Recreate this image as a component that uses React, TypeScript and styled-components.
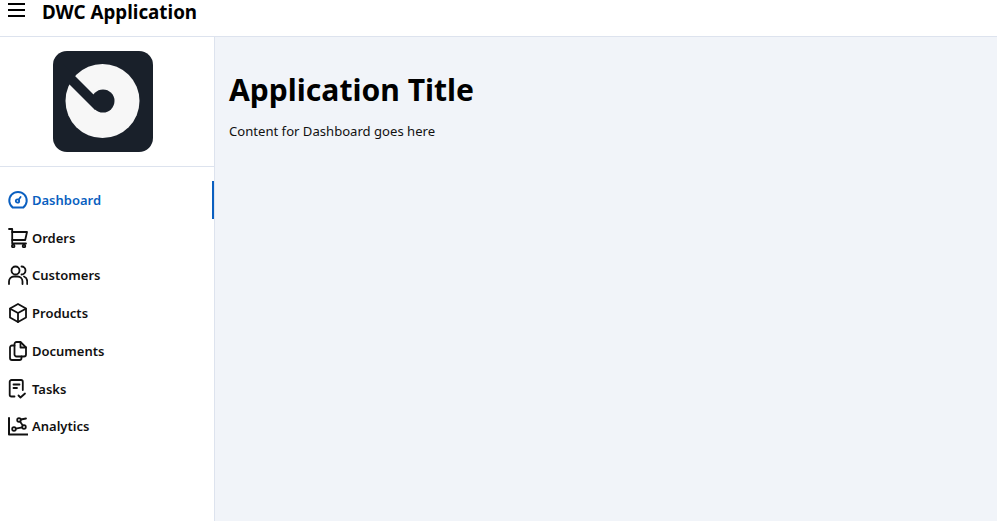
import React from "react";
import styled, { createGlobalStyle } from "styled-components";

const GlobalStyle = createGlobalStyle`
  html, body {
    margin: 0;
    padding: 0;
    height: 100%;
    overflow: hidden;
    background: #fff;
    font-family: "Noto Sans", "Open Sans", sans-serif;
  }
`;

const Page = styled.div`
  display: flex;
  flex-direction: column;
  height: 100vh;
`;

const Toolbar = styled.header`
  display: flex;
  align-items: center;
  gap: 16px;
  padding: 0 0 12px 8px;
  box-sizing: border-box;
  border-bottom: 1px solid #dde3ee;
  flex: 0 0 37px;
`;

const MenuButton = styled.div`
  display: flex;
  width: 18px;
  height: 18px;
  color: #000;
`;

const AppName = styled.div`
  font-size: 18.8px;
  font-weight: 700;
  color: #000;
  line-height: 22px;
`;

const Body = styled.div`
  display: flex;
  flex: 1;
  min-height: 0;
`;

const Sidebar = styled.aside`
  width: 215px;
  flex: 0 0 215px;
  box-sizing: border-box;
  border-right: 1px solid #dde3ee;
  background: #fff;
`;

const LogoArea = styled.div`
  display: flex;
  justify-content: center;
  padding: 14px 8px 14px 0;
  border-bottom: 1px solid #dde3ee;
`;

const Nav = styled.nav`
  display: flex;
  flex-direction: column;
  padding-top: 14px;
`;

const NavItem = styled.div<{ $active?: boolean }>`
  display: flex;
  align-items: center;
  gap: 4px;
  height: 37.75px;
  padding-left: 8px;
  box-sizing: border-box;
  font-size: 13px;
  font-weight: 600;
  color: ${(p) => (p.$active ? "#0a5fc0" : "#111")};
  border-right: 2px solid ${(p) => (p.$active ? "#0a5fc0" : "transparent")};
`;

const NavIcon = styled.svg`
  width: 20px;
  height: 20px;
  flex: 0 0 20px;
  fill: none;
  stroke: currentColor;
  stroke-width: 1.8;
  stroke-linecap: round;
  stroke-linejoin: round;
`;

const Main = styled.main`
  flex: 1;
  background: #f1f4f9;
  padding: 31px 14px;
`;

const Title = styled.h1`
  margin: 0;
  font-size: 30.1px;
  line-height: 44px;
  font-weight: 700;
  color: #000;
`;

const Text = styled.p`
  margin: 10px 0 0;
  font-size: 13.1px;
  line-height: 18px;
  color: #111;
`;

const Logo = () => (
  <svg width="100" height="101" viewBox="0 0 100 101">
    <rect width="100" height="101" rx="14" fill="#19202a" />
    <circle cx="49.500" cy="50" r="37" fill="#f7f7f7" />
    <path d="M42 59 L2 19 L10 13 L45 48 Z" fill="#19202a" />
    <circle cx="50" cy="50" r="11.500" fill="#19202a" />
  </svg>
);

const items = [
  {
    label: "Dashboard",
    active: true,
    icon: (
      <>
        <path d="M4.600 17.400h10.800a8.700 8.700 0 1 0-10.800 0z" strokeWidth="2" />
        <circle cx="9.500" cy="11" r="1.700" />
        <path d="M10.800 9.500l1.800-2.500" />
      </>
    ),
  },
  {
    label: "Orders",
    icon: (
      <>
        <path d="M1 1h3.200v14.500H18" />
        <path d="M4.200 4h14.800l-1.800 8H4.200" />
        <circle cx="5.200" cy="18" r="1.300" />
        <circle cx="16" cy="18" r="1.300" />
      </>
    ),
  },
  {
    label: "Customers",
    icon: (
      <>
        <circle cx="7.500" cy="5.500" r="4" />
        <path d="M1 19v-2.500a5 5 0 0 1 5-5h3.500a5 5 0 0 1 5 5V19" />
        <path d="M13.500 1.500a4 4 0 0 1 0 8" />
        <path d="M16 11.500a5 5 0 0 1 3.200 4.700V19" />
      </>
    ),
  },
  {
    label: "Products",
    icon: (
      <>
        <path d="M10 1l8 4.500v9L10 19l-8-4.500v-9z" />
        <path d="M2.200 5.700L10 10l7.800-4.300M10 10v9" />
      </>
    ),
  },
  {
    label: "Documents",
    icon: (
      <>
        <path d="M8.500 1h4l5.500 5.500V13.500a2 2 0 0 1-2 2H8.500a2 2 0 0 1-2-2V3a2 2 0 0 1 2-2z" />
        <path d="M12.500 1.500v5H18" />
        <path d="M6.500 4.500H4a2 2 0 0 0-2 2V17a2 2 0 0 0 2 2h7.500a2 2 0 0 0 2-2v-1.500" />
      </>
    ),
  },
  {
    label: "Tasks",
    icon: (
      <>
        <path d="M6.500 17.500H3.500a1.800 1.800 0 0 1-1.800-1.800V2.800A1.800 1.800 0 0 1 3.500 1h9.500a1.800 1.800 0 0 1 1.800 1.800V11" />
        <path d="M5.500 5.500h6M5.500 9h3.500" />
        <path d="M10.500 16.500l2 2 4.500-4" />
      </>
    ),
  },
  {
    label: "Analytics",
    icon: (
      <>
        <path d="M1 2v16.500h18.500" strokeWidth="2" />
        <circle cx="6" cy="13" r="1.800" />
        <circle cx="11" cy="4" r="1.800" />
        <circle cx="16" cy="11" r="1.800" />
        <path d="M7.800 12.600L14.200 11.300M12 5.500l2.800 4M12.800 3.500l5.200-1" />
      </>
    ),
  },
];

export default function App() {
  return (
    <Page>
      <GlobalStyle />
      <Toolbar>
        <MenuButton>
          <svg width="18" height="18" viewBox="0 0 18 18" fill="none" stroke="currentColor" strokeWidth="2">
            <path d="M0 1h17M0 7h17M0 13h17" />
          </svg>
        </MenuButton>
        <AppName>DWC Application</AppName>
      </Toolbar>
      <Body>
        <Sidebar>
          <LogoArea>
            <Logo />
          </LogoArea>
          <Nav>
            {items.map((item) => (
              <NavItem key={item.label} $active={item.active}>
                <NavIcon viewBox="0 0 20 20">{item.icon}</NavIcon>
                {item.label}
              </NavItem>
            ))}
          </Nav>
        </Sidebar>
        <Main>
          <Title>Application Title</Title>
          <Text>Content for Dashboard goes here</Text>
        </Main>
      </Body>
    </Page>
  );
}
